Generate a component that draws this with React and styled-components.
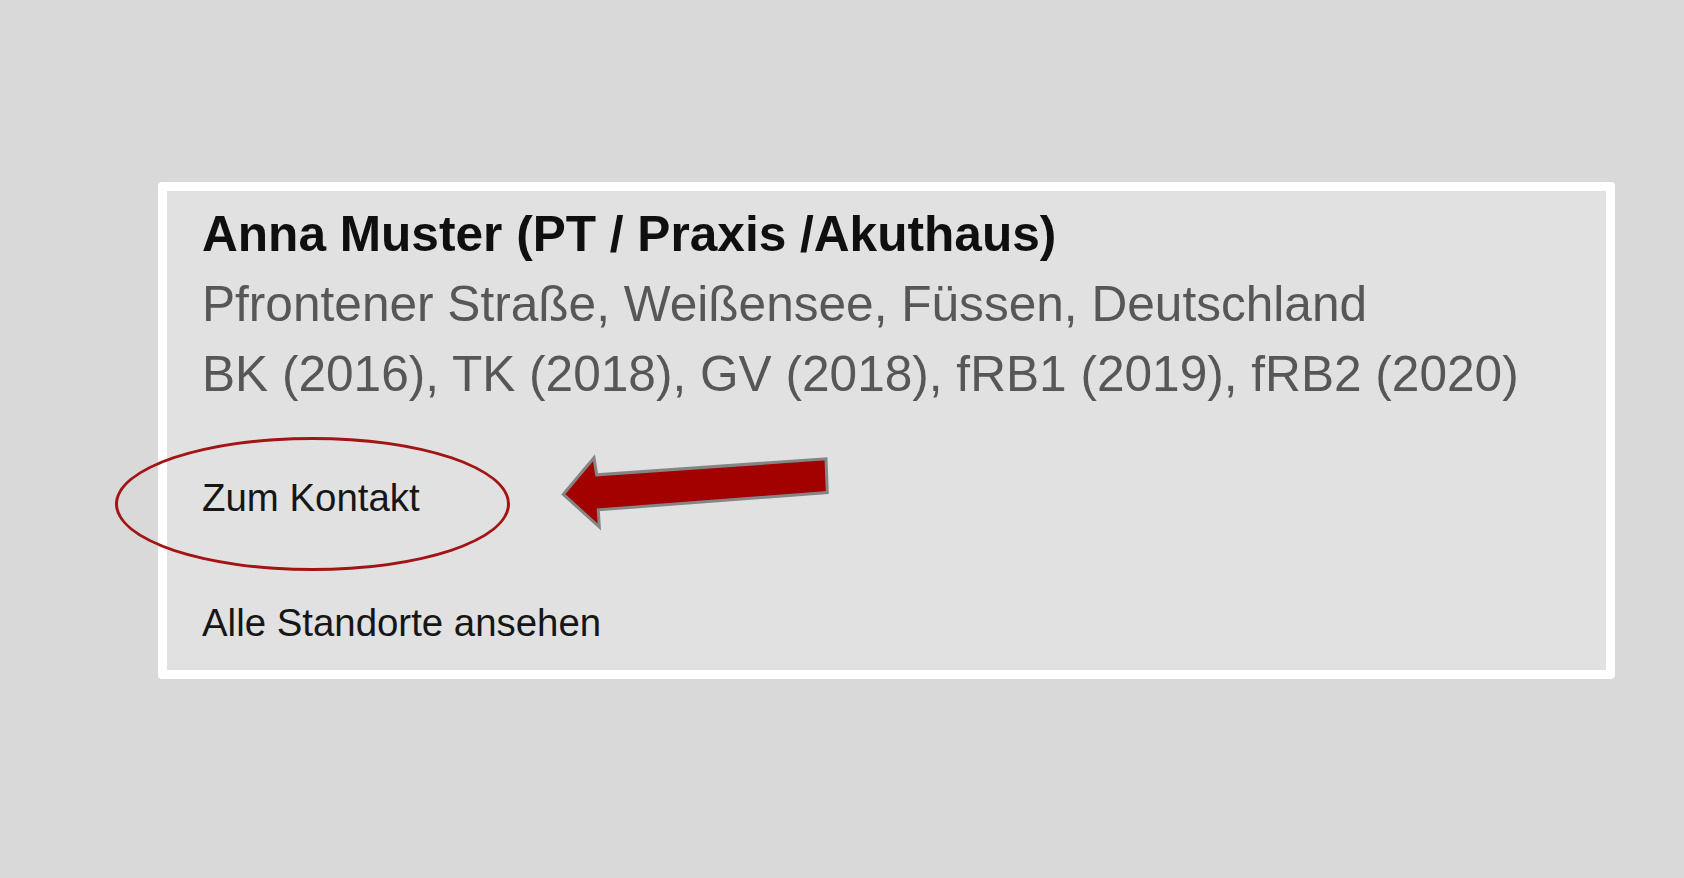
import React from "react";
import styled, { createGlobalStyle } from "styled-components";

const GlobalStyle = createGlobalStyle`
  html, body {
    margin: 0;
    padding: 0;
    background: #d9d9d9;
  }
  body {
    font-family: "Liberation Sans", Arial, sans-serif;
  }
`;

function App() {
  return (
    <>
      <GlobalStyle />
      <StyledPage>
        <Card>
          <Title>Anna Muster (PT / Praxis /Akuthaus)</Title>
          <InfoLine>Pfrontener Straße, Weißensee, Füssen, Deutschland</InfoLine>
          <InfoLine>BK (2016), TK (2018), GV (2018), fRB1 (2019), fRB2 (2020)</InfoLine>

          <LinkRow $top={62}>
            <CardLink href="#kontakt">Zum Kontakt</CardLink>
            <Ellipse />
            <Arrow viewBox="0 0 272 78" width="272" height="78">
              <polygon
                points="3.3,40.3 34,3.7 36.7,20.8 266,4.8 267.3,38.5 38.3,55.8 39.3,73"
                fill="#a30000"
                stroke="#858585"
                strokeWidth="3"
                strokeLinejoin="miter"
              />
            </Arrow>
          </LinkRow>

          <LinkRow $top={71}>
            <CardLink href="#standorte">Alle Standorte ansehen</CardLink>
          </LinkRow>
        </Card>
      </StyledPage>
    </>
  );
}

export default App;

const StyledPage = styled.div`
  width: 1684px;
  height: 878px;
  padding: 182px 0 0 158px;
  box-sizing: border-box;
`;

const Card = styled.section`
  width: 1457px;
  box-sizing: border-box;
  border: 9px solid #ffffff;
  border-radius: 4px;
  background: #e1e1e1;
  padding: 8px 36px 20px 35px;
  display: flex;
  flex-direction: column;
  align-items: flex-start;
`;

const Title = styled.h2`
  margin: 0;
  font-size: 49.6px;
  line-height: 70px;
  font-weight: 700;
  color: #0f0f0f;
`;

const InfoLine = styled.p`
  margin: 0;
  font-size: 49.6px;
  line-height: 70px;
  color: #575757;
`;

const LinkRow = styled.div`
  position: relative;
  margin-top: ${(p) => p.$top}px;
  height: 54px;
  display: flex;
  align-items: center;
`;

const CardLink = styled.a`
  font-size: 38.4px;
  line-height: 54px;
  color: #161616;
  text-decoration: none;
`;

const Ellipse = styled.span`
  position: absolute;
  left: -87px;
  top: -34px;
  width: 395px;
  height: 134px;
  box-sizing: border-box;
  border: 3px solid #a31414;
  border-radius: 50%;
  pointer-events: none;
`;

const Arrow = styled.svg`
  position: absolute;
  left: 358px;
  top: -17px;
  overflow: visible;
`;
